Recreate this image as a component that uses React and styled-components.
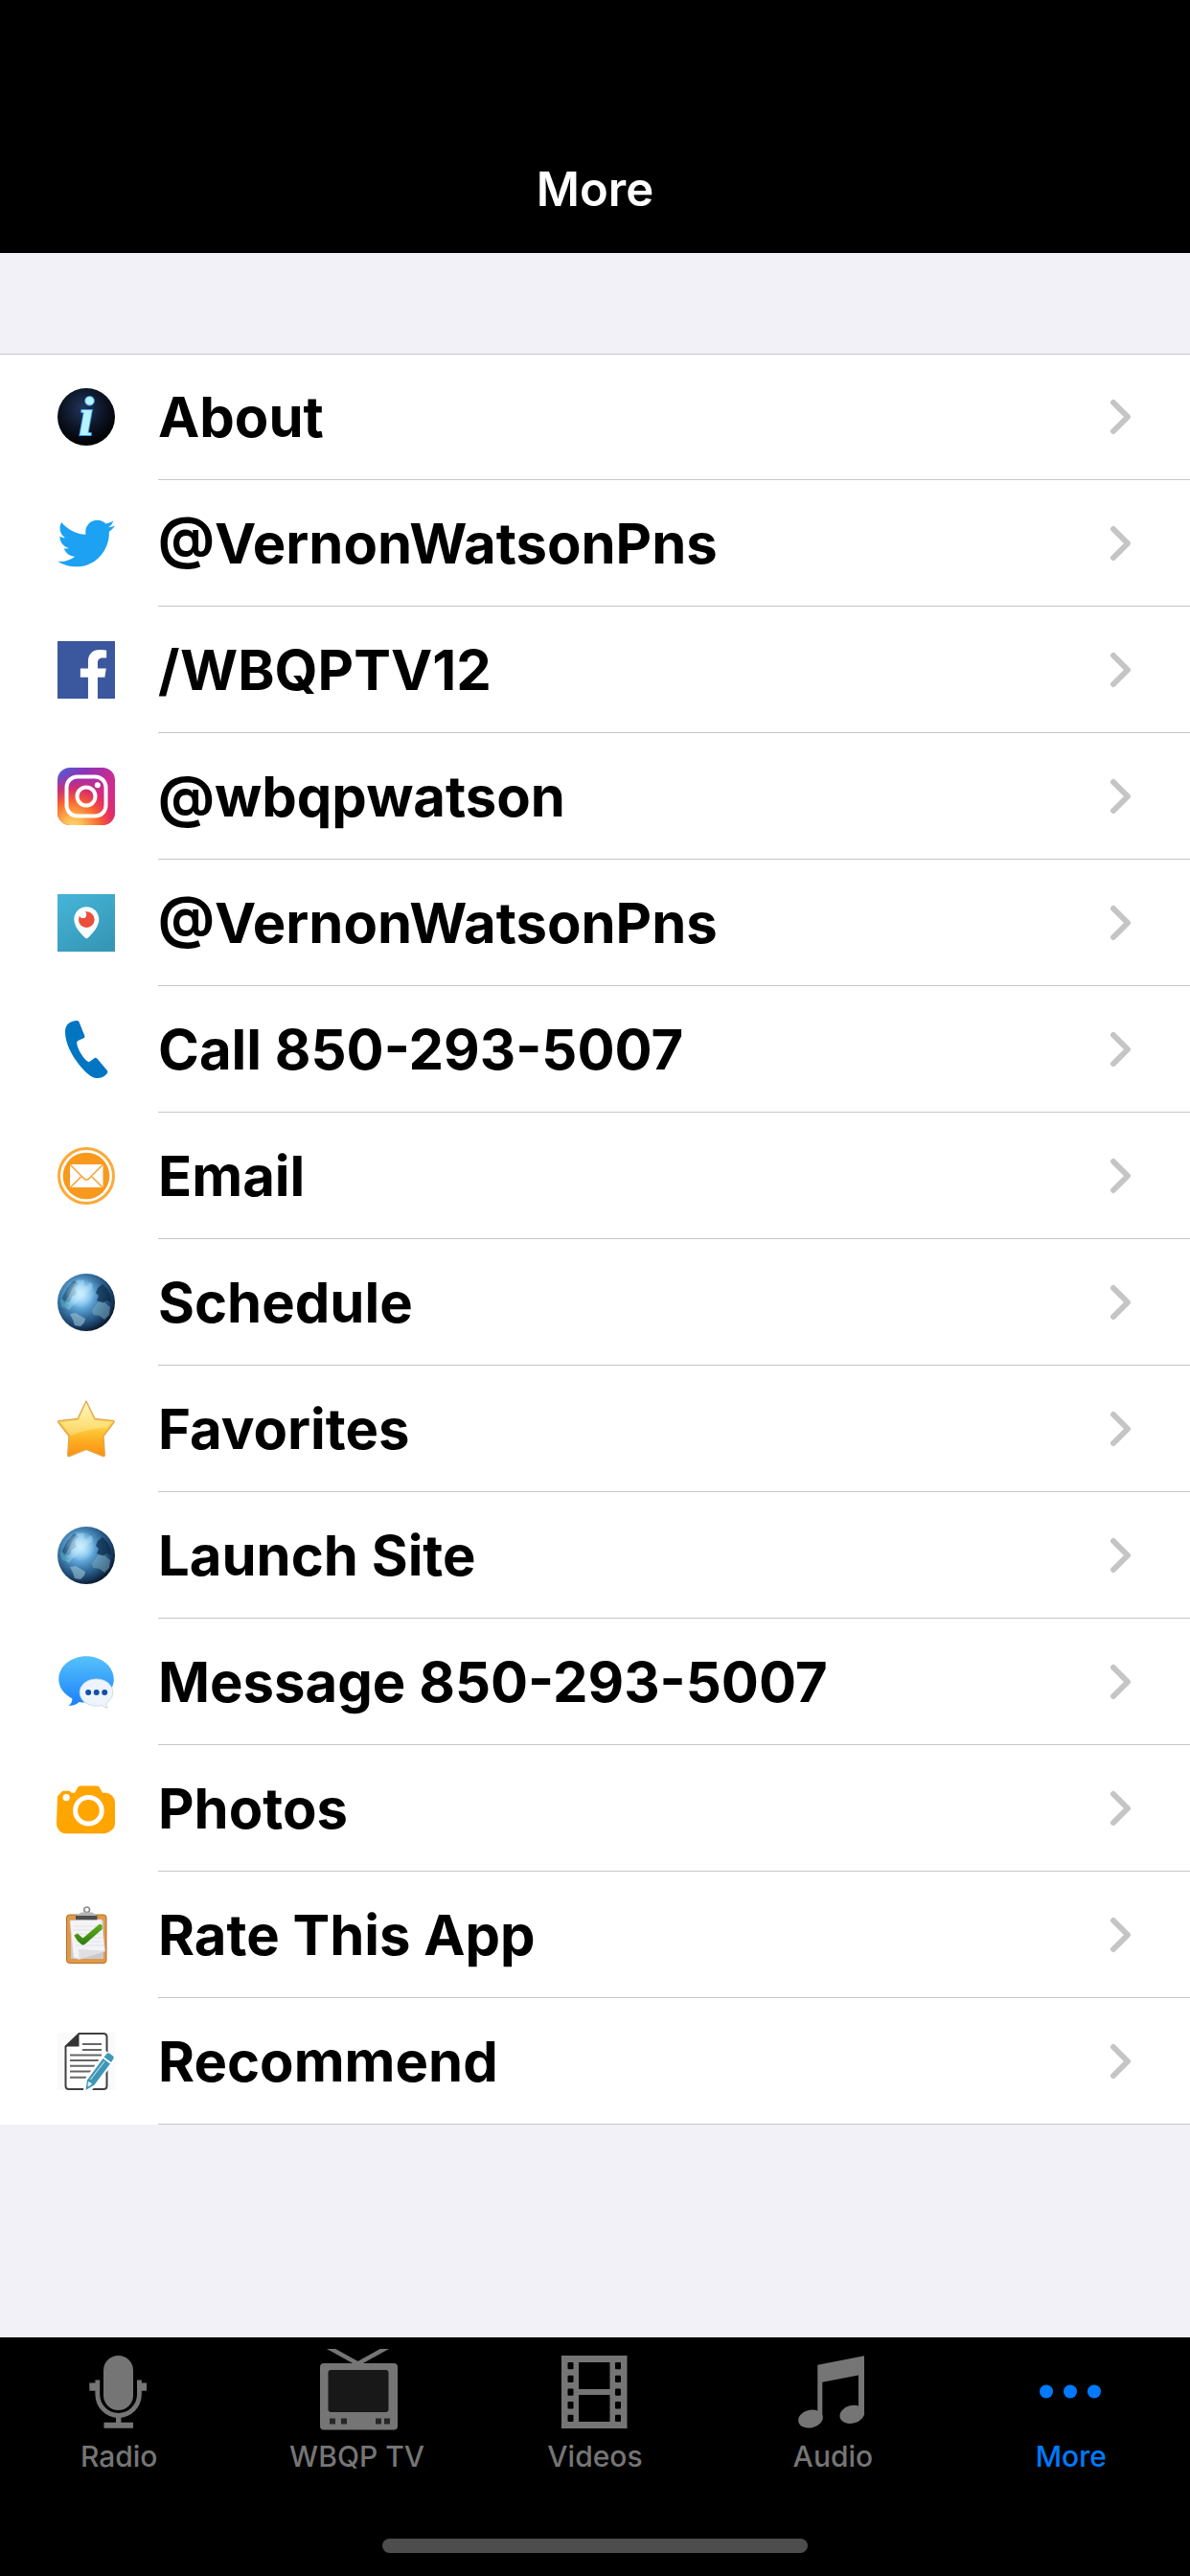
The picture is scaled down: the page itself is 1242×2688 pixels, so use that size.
import React, { useState } from 'react';
import styled, { createGlobalStyle } from 'styled-components';
import { FaFacebookF, FaTwitter } from 'react-icons/fa';

const GlobalStyle = createGlobalStyle`
  body {
    margin: 0;
    background-color: #f2f1f7;
    font-family: Inter, 'Liberation Sans', sans-serif;
  }
`;

const Page = styled.div`
  display: flex;
  flex-direction: column;
  min-height: 100vh;
`;

const Header = styled.header`
  display: flex;
  justify-content: center;
  padding-top: 132px;
  background-color: #000;
`;

const Title = styled.h1`
  margin: 0;
  color: #fff;
  font-size: 49px;
  font-weight: 600;
  line-height: 132px;
`;

const Main = styled.main`
  flex: 1;
  padding: 105px 0;
`;

const List = styled.ul`
  margin: 0;
  padding: 0;
  list-style: none;
  background-color: #fff;
`;

const Item = styled.li`
  &:first-child {
    box-shadow: inset 0 1px #c6c6c8;
  }
`;

const RowLink = styled.a`
  display: flex;
  align-items: center;
  gap: 45px;
  padding-left: 60px;
  color: #000;
  text-decoration: none;
`;

const RowIcon = styled.svg`
  flex: none;
  width: 60px;
  height: 60px;
  overflow: visible;
`;

const RowBody = styled.span`
  flex: 1;
  display: flex;
  align-items: center;
  justify-content: space-between;
  box-sizing: border-box;
  height: 132px;
  padding-right: 60px;
  border-bottom: 1px solid #c6c6c8;
`;

const RowLabel = styled.span`
  font-size: 58px;
  font-weight: 700;
  line-height: 72px;
`;

const Chevron = styled.svg`
  width: 24px;
  height: 40px;
  fill: none;
  stroke: #c5c5c7;
  stroke-width: 6;
  stroke-linecap: round;
  stroke-linejoin: round;
`;

const TabBar = styled.footer`
  display: flex;
  flex-direction: column;
  align-items: center;
  padding-bottom: 24px;
  background-color: #000;
`;

const Tabs = styled.nav`
  display: grid;
  grid-template-columns: repeat(5, 1fr);
  align-self: stretch;
  height: 210px;
`;

const Tab = styled.button`
  display: flex;
  flex-direction: column;
  align-items: center;
  gap: 4px;
  padding: 12px 0 0;
  border: none;
  background: none;
  color: ${props => (props.$active ? '#007aff' : '#757575')};
  font-family: inherit;
  font-size: 30px;
  font-weight: 500;
  line-height: 36px;
  cursor: pointer;
`;

const TabIcon = styled.svg`
  width: 90px;
  height: 90px;
  fill: currentColor;
`;

const HomeIndicator = styled.div`
  width: 444px;
  height: 15px;
  border-radius: 8px;
  background-color: #4d4d4d;
`;

function InfoIcon() {
  return (
    <RowIcon viewBox="0 0 60 60">
      <defs>
        <radialGradient id="info-bg" cx="0.45" cy="0.35" r="0.6">
          <stop offset="0" stopColor="#22365c" />
          <stop offset="0.6" stopColor="#0d1526" />
          <stop offset="1" stopColor="#020306" />
        </radialGradient>
      </defs>
      <circle cx="30" cy="30" r="30" fill="url(#info-bg)" />
      <text
        x="30"
        y="49"
        textAnchor="middle"
        fontFamily="'Liberation Serif', serif"
        fontSize="58"
        fontStyle="italic"
        fontWeight="700"
        fill="#b9f2ff"
        stroke="#3aa0e8"
        strokeWidth="2"
        paintOrder="stroke"
      >
        i
      </text>
    </RowIcon>
  );
}

function TwitterIcon() {
  return (
    <RowIcon viewBox="0 0 60 60">
      <FaTwitter size={60} color="#1da1f2" />
    </RowIcon>
  );
}

function FacebookIcon() {
  return (
    <RowIcon viewBox="0 0 60 60">
      <rect width="60" height="60" fill="#3b579d" />
      <FaFacebookF x="12" y="9" size={51} color="#fff" />
    </RowIcon>
  );
}

function InstagramIcon() {
  return (
    <RowIcon viewBox="0 0 60 60">
      <defs>
        <linearGradient id="ig-base" x1="0" y1="0" x2="1" y2="0.9">
          <stop offset="0" stopColor="#4a64d8" />
          <stop offset="0.28" stopColor="#8a34b8" />
          <stop offset="0.6" stopColor="#c92c93" />
          <stop offset="1" stopColor="#e0307a" />
        </linearGradient>
        <radialGradient id="ig-warm" cx="0.27" cy="1.05" r="0.95">
          <stop offset="0" stopColor="#ffd976" />
          <stop offset="0.2" stopColor="#fdb94f" />
          <stop offset="0.5" stopColor="#f9622f" />
          <stop offset="0.75" stopColor="#e52a5c" stopOpacity="0.7" />
          <stop offset="1" stopColor="#c92c93" stopOpacity="0" />
        </radialGradient>
      </defs>
      <rect width="60" height="60" rx="13" fill="url(#ig-base)" />
      <rect width="60" height="60" rx="13" fill="url(#ig-warm)" />
      <g fill="none" stroke="#fff" strokeWidth="4">
        <rect x="9.5" y="9.5" width="41" height="41" rx="11" />
        <circle cx="30" cy="30" r="9.5" />
      </g>
      <circle cx="41.8" cy="18.2" r="3" fill="#fff" />
    </RowIcon>
  );
}

function PeriscopeIcon() {
  return (
    <RowIcon viewBox="0 0 60 60">
      <defs>
        <linearGradient id="periscope-bg" x1="0.2" y1="0" x2="0.8" y2="1">
          <stop offset="0" stopColor="#45b3d6" />
          <stop offset="1" stopColor="#3596b5" />
        </linearGradient>
      </defs>
      <rect width="60" height="60" fill="url(#periscope-bg)" />
      <path
        d="M30.3 13.3c7.3 0 13 5.7 13 13 0 7.2-6 14.2-11.3 19.2-1.1 1-2.2 1-3.3 0-5.4-5-11.4-12-11.4-19.2 0-7.3 5.7-13 13-13z"
        fill="#f7fcfe"
      />
      <circle cx="30.3" cy="26.6" r="8.3" fill="#ea4e3d" />
      <circle cx="26.6" cy="21.4" r="3.6" fill="#f7fcfe" />
    </RowIcon>
  );
}

function PhoneIcon() {
  return (
    <RowIcon viewBox="0 0 60 60">
      <path
        d="M19.5 0c1.8-.2 2.600.4 3.200 1.800l5.600 14c.4 1.100.1 1.800-.9 2.400l-5.600 2.600c-1.300.7-1.800 1.800-1.500 3.400 1.300 6.300 5.400 13.300 10.300 17.800 1.400 1.100 2.600 1.200 3.800.2l4-3c1.100-.7 2.200-.5 3.100.5l10.300 12.400c.8 1 .7 2-.1 3.100-3 3.600-6.900 5-10.800 4.800-3-.1-6.200-1.800-9-4.300C18.500 43.700 8 26 8 11.500 8 5 12 .8 19.500 0z"
        fill="#0075c1"
      />
    </RowIcon>
  );
}

function EmailIcon() {
  return (
    <RowIcon viewBox="0 0 60 60">
      <circle cx="30" cy="30" r="28.5" fill="#fff" stroke="#fbaa3c" strokeWidth="3" />
      <circle cx="30" cy="30" r="24.3" fill="#f8991d" />
      <rect x="13" y="18" width="34.5" height="24" fill="#fff" />
      <path
        d="M13 18l14.5 14.7c1.8 1.7 3.7 1.7 5.5 0L47.5 18M13.5 42l11-11M47 42L36 31"
        fill="none"
        stroke="#f8a336"
        strokeWidth="1.6"
      />
    </RowIcon>
  );
}

function GlobeIcon({ id }) {
  return (
    <RowIcon viewBox="0 0 60 60">
      <defs>
        <radialGradient id={id} cx="0.4" cy="0.38" r="0.64">
          <stop offset="0" stopColor="#aee2ff" />
          <stop offset="0.3" stopColor="#69b2e4" />
          <stop offset="0.6" stopColor="#35709f" />
          <stop offset="0.84" stopColor="#1b3f66" />
          <stop offset="1" stopColor="#0a1a2e" />
        </radialGradient>
        <radialGradient id={`${id}-shine`}>
          <stop offset="0" stopColor="#d6f2ff" stopOpacity="0.8" />
          <stop offset="1" stopColor="#d6f2ff" stopOpacity="0" />
        </radialGradient>
      </defs>
      <circle cx="30" cy="30" r="30" fill={`url(#${id})`} />
      <path d="M10 15l7-8 5 3-4 5 2 6-5 3-2 5-6 2-2-6z" fill="#0a3050" opacity="0.5" />
      <path
        d="M17 12l4-5 7 0-1 5 3 2 4-5 3 2-1 5-5 3-3 4-5 2-2 5-5 3-4 5-4-3 0-6 4-6z"
        fill="#b5e4f8"
        opacity="0.35"
      />
      <path d="M42 15l5-4 5 5 4 8 0 6-5-2-4 3-6-3 2-5-3-3z" fill="#06243f" opacity="0.65" />
      <path d="M13 42l6-1 10 6-1 4-4 4-6-1-2-6z" fill="#9cc4d3" opacity="0.6" />
      <path d="M36 38l4-5 3-4 6 1 6 5-1 8-5 5-5-4-7-1z" fill="#7fb0bf" opacity="0.5" />
      <path d="M3 27l6 2 3 5-5 2-3-2z" fill="#4ca5b8" opacity="0.6" />
      <circle cx="24" cy="20" r="16" fill={`url(#${id}-shine)`} />
    </RowIcon>
  );
}

function StarIcon() {
  return (
    <RowIcon viewBox="0 0 60 60">
      <defs>
        <linearGradient id="star-fill" x1="0" y1="0" x2="0" y2="1">
          <stop offset="0" stopColor="#fff6b8" />
          <stop offset="0.45" stopColor="#fdd445" />
          <stop offset="0.7" stopColor="#fdb022" />
          <stop offset="1" stopColor="#fb8f12" />
        </linearGradient>
      </defs>
      <path
        d="M30 1l9 18.500 20 2.200v1.300L48 37.500 49.300 57q0 2-2 1.500L30 51.500l-17.300 7q-2 .5-2-1.500L12 37.500.8 23v-1.300l20.200-2.200z"
        fill="url(#star-fill)"
        stroke="#e0a54c"
        strokeWidth="1.3"
        strokeLinejoin="round"
      />
      <path d="M30 4l7.500 17 18 2.500-4.500 5.500C36 29 26 33 13.500 37L4 23.500 22.500 21z" fill="#fff" opacity="0.28" />
    </RowIcon>
  );
}

function MessageIcon() {
  return (
    <RowIcon viewBox="0 0 60 60">
      <defs>
        <linearGradient id="bubble-fill" x1="0" y1="0" x2="0" y2="1">
          <stop offset="0" stopColor="#56c2fb" />
          <stop offset="1" stopColor="#1a80fb" />
        </linearGradient>
      </defs>
      <path
        d="M30 3.300c16 0 28.800 10.700 28.800 24S46 51.600 30 51.600c-2.600 0-5-.2-7.300-.7-3 2.700-6.500 4.100-11.200 4.100 2.600-2 4-4.500 3.800-7.600C6.700 43 1.300 35.700 1.300 27.300c0-13.300 12.700-24 28.700-24z"
        fill="url(#bubble-fill)"
      />
      <path
        d="M40.500 27c9.700 0 17.300 6.200 17.300 14 0 4.800-2.800 8.900-7 11.400 0 2 .5 3.500 1.700 5-2.600-.4-4.500-1.400-6-3-1.900.5-3.900.7-6 .7-9.700 0-17.300-6.300-17.300-14.100S30.800 27 40.500 27z"
        fill="#edf4fb"
        stroke="#c9d5e0"
        strokeWidth="0.8"
      />
      <g fill="#1450a8">
        <circle cx="32.2" cy="41" r="3" />
        <circle cx="40.7" cy="41" r="3" />
        <circle cx="49.2" cy="41" r="3" />
      </g>
    </RowIcon>
  );
}

function CameraIcon() {
  return (
    <RowIcon viewBox="0 0 60 60">
      <path
        d="M0 17.500l4-4.500q1-1.300 2.500-1.300h5.500q1.500 0 2.500 2h3.500l3-5.500q1-1.700 3-1.700h17q2 0 3 1.700l3 5.500h3q4 0 7 3t3 7v22q0 4-3.500 7t-7 3.600h-41q-4 0-7-3.600t-2.500-7z"
        fill="#ffa500"
      />
      <circle cx="9.2" cy="18.7" r="3.6" fill="#fff" />
      <circle cx="32.4" cy="32.3" r="13.8" fill="none" stroke="#fff" strokeWidth="5" />
    </RowIcon>
  );
}

function ClipboardIcon() {
  return (
    <RowIcon viewBox="0 0 60 60">
      <defs>
        <linearGradient id="check-fill" x1="0" y1="0" x2="0" y2="1">
          <stop offset="0" stopColor="#5fae1c" />
          <stop offset="1" stopColor="#2f7d0c" />
        </linearGradient>
      </defs>
      <rect x="9.5" y="9" width="41.5" height="50.5" rx="3" fill="#e0994a" stroke="#b56f28" />
      <path d="M14 15h34v40H14z" fill="#c9c9cc" />
      <path d="M13 15l33-1 3.500 33-27 8.500-6-2z" fill="#f4f4f7" stroke="#d4d4da" strokeWidth="0.7" />
      <path d="M17 21h28M17 25h29M18 29h28M18 33h29M19 37h28M19 41h29" stroke="#e0e0e8" strokeWidth="1" />
      <path d="M22 45l27 1.500L22.500 55z" fill="#dfdfe3" />
      <circle cx="30.7" cy="3.8" r="2.8" fill="none" stroke="#8d8d8d" strokeWidth="1.7" />
      <path d="M25 6.500h11.500l4.500 3.500v5H19v-5z" fill="#b5b5b5" />
      <rect x="19" y="10" width="22.5" height="4" fill="#4e4e50" />
      <path d="M17.300 30.500l3.700-2 5.500 5L44 18.500l2.700 1.500v4L29 39.500q-2.500 2-4.500 0-4.500-3.500-7.200-9z" fill="url(#check-fill)" />
    </RowIcon>
  );
}

function DocumentIcon() {
  return (
    <RowIcon viewBox="0 0 60 60">
      <rect width="60" height="60" fill="#fafafa" />
      <path
        d="M22.500 1H48q3.500 0 3.500 3.500v51q0 3.500-3.500 3.500H12q-3.500 0-3.500-3.500V14.500z"
        fill="#fff"
        stroke="#404040"
        strokeWidth="2"
      />
      <path d="M22.500 1v13.500H8z" fill="#333" />
      <path
        d="M26 12h20M26 18h20M13 23.500h33M13 29h30M13 34.700h26M13 40.500h22.500M13 46.700h17.500"
        stroke="#666"
        strokeWidth="2"
        fill="none"
      />
      <path d="M50 19l10 6v5L36 60h-9l2-12z" fill="#fff" />
      <path d="M51.500 22q1-1.300 2.500-.5l4 3q1.300 1 .5 2.500L56 31l-7.500-5.500z" fill="#3f97b8" />
      <path d="M47.500 27l7.500 5.500L38.500 54.500l-9 5.500 1.500-10.500z" fill="#3f97b8" />
      <path d="M49 30L34.500 49M32.500 51.500l3 2-3.500 2.500z" stroke="#e4f3f8" strokeWidth="1" fill="#fff" />
    </RowIcon>
  );
}

function RadioIcon() {
  return (
    <TabIcon viewBox="0 0 90 90">
      <rect x="29" y="7" width="31" height="57" rx="15.5" />
      <path d="M22.800 32.500V47.500a21.800 22 0 0 0 43.600 0V32.500" fill="none" stroke="currentColor" strokeWidth="4.8" />
      <path d="M14.300 35.500h7v8.300h-7zM67.500 35.500h6.500v8.300h-6.500zM42 70h5.400v8H42zM29.500 76.700h30.500v6H29.500z" />
    </TabIcon>
  );
}

function TvIcon() {
  return (
    <TabIcon viewBox="0 0 90 90">
      <path d="M14 -2L45.500 15.500 77 -2" fill="none" stroke="currentColor" strokeWidth="4.5" />
      <rect x="6" y="15" width="81" height="69.5" rx="4" />
      <rect x="14.5" y="22" width="63" height="44" rx="3" fill="#181818" />
      <path d="M16 72.500h6v6h-6zM28 72.500h6v6h-6zM64 72.500h6v6h-6zM73 72.500h6v6h-6z" fill="#262626" />
    </TabIcon>
  );
}

function FilmIcon() {
  const holes = [14, 27.7, 41.4, 55.1, 68.8];

  return (
    <TabIcon viewBox="0 0 90 90">
      <rect x="10" y="7" width="68.5" height="76" />
      <g fill="#000">
        <rect x="28" y="14" width="32.5" height="28" />
        <rect x="28" y="48" width="32.5" height="28" />
        {holes.map(y => (
          <React.Fragment key={y}>
            <rect x="16.5" y={y} width="6" height="7.3" rx="1" />
            <rect x="66" y={y} width="6" height="7.3" rx="1" />
          </React.Fragment>
        ))}
      </g>
    </TabIcon>
  );
}

function MusicIcon() {
  return (
    <TabIcon viewBox="0 0 90 90">
      <path d="M29.300 16.700L78 7.300V69h-6V27.500l-37.700 7.300V74h-5z" />
      <ellipse cx="22" cy="73" rx="13" ry="9.3" transform="rotate(-14 22 73)" />
      <ellipse cx="65.3" cy="68.3" rx="13" ry="9.3" transform="rotate(-14 65.3 68.3)" />
    </TabIcon>
  );
}

function MoreIcon() {
  return (
    <TabIcon viewBox="0 0 90 90">
      <circle cx="19" cy="44.5" r="7" />
      <circle cx="44" cy="44.5" r="7" />
      <circle cx="69" cy="44.5" r="7" />
    </TabIcon>
  );
}

const rows = [
  { label: 'About', icon: <InfoIcon /> },
  { label: '@VernonWatsonPns', icon: <TwitterIcon /> },
  { label: '/WBQPTV12', icon: <FacebookIcon /> },
  { label: '@wbqpwatson', icon: <InstagramIcon /> },
  { label: '@VernonWatsonPns', icon: <PeriscopeIcon /> },
  { label: 'Call 850-293-5007', icon: <PhoneIcon />, href: 'tel:8502935007' },
  { label: 'Email', icon: <EmailIcon /> },
  { label: 'Schedule', icon: <GlobeIcon id="globe-schedule" /> },
  { label: 'Favorites', icon: <StarIcon /> },
  { label: 'Launch Site', icon: <GlobeIcon id="globe-site" /> },
  { label: 'Message 850-293-5007', icon: <MessageIcon />, href: 'sms:8502935007' },
  { label: 'Photos', icon: <CameraIcon /> },
  { label: 'Rate This App', icon: <ClipboardIcon /> },
  { label: 'Recommend', icon: <DocumentIcon /> },
];

const tabs = [
  { label: 'Radio', icon: <RadioIcon /> },
  { label: 'WBQP TV', icon: <TvIcon /> },
  { label: 'Videos', icon: <FilmIcon /> },
  { label: 'Audio', icon: <MusicIcon /> },
  { label: 'More', icon: <MoreIcon /> },
];

function App() {
  const [activeTab, setActiveTab] = useState('More');

  return (
    <Page>
      <GlobalStyle />
      <Header>
        <Title>More</Title>
      </Header>
      <Main>
        <List>
          {rows.map((row, index) => (
            <Item key={index}>
              <RowLink href={row.href || '#'}>
                {row.icon}
                <RowBody>
                  <RowLabel>{row.label}</RowLabel>
                  <Chevron viewBox="0 0 24 40">
                    <path d="M4 5l15 15L4 35" />
                  </Chevron>
                </RowBody>
              </RowLink>
            </Item>
          ))}
        </List>
      </Main>
      <TabBar>
        <Tabs>
          {tabs.map(tab => (
            <Tab
              key={tab.label}
              type="button"
              $active={tab.label === activeTab}
              onClick={() => setActiveTab(tab.label)}
            >
              {tab.icon}
              {tab.label}
            </Tab>
          ))}
        </Tabs>
        <HomeIndicator />
      </TabBar>
    </Page>
  );
}

export default App;
